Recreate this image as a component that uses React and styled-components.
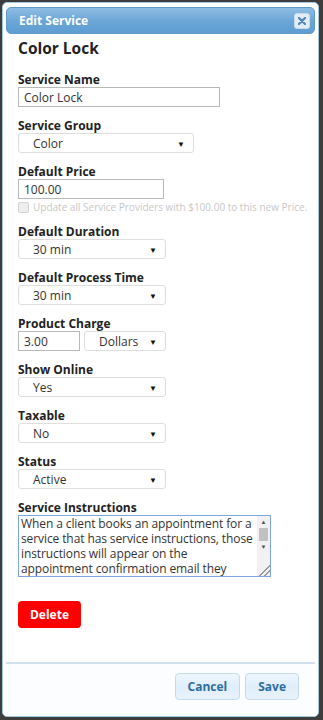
import React from "react";
import styled, { createGlobalStyle } from "styled-components";

const GlobalStyle = createGlobalStyle`
  html, body {
    margin: 0;
    padding: 0;
    background: #3d3d3d;
    font-family: "Open Sans", "Liberation Sans", sans-serif;
  }
`;

const FIELDS = [
  { label: "Default Duration", value: "30 min" },
  { label: "Default Process Time", value: "30 min" },
];

const LATER = [
  { label: "Show Online", value: "Yes" },
  { label: "Taxable", value: "No" },
  { label: "Status", value: "Active" },
];

const SelectBox = ({ value, width }) => (
  <Select $width={width}>
    <span>{value}</span>
    <Arrow>▼</Arrow>
  </Select>
);

const App = () => {
  return (
    <>
      <GlobalStyle />
      <Dialog>
        <TitleBar>
          <Title>Edit Service</Title>
          <CloseButton aria-label="close">
            <svg width="8" height="8" viewBox="0 0 8 8">
              <path
                d="M1 1 L7 7 M7 1 L1 7"
                stroke="#4f85bb"
                strokeWidth="2.2"
                strokeLinecap="round"
              />
            </svg>
          </CloseButton>
        </TitleBar>

        <Body>
          <Heading>Color Lock</Heading>

          <Field>
            <Label>Service Name</Label>
            <TextInput $width={202} defaultValue="Color Lock" />
          </Field>

          <Field>
            <Label>Service Group</Label>
            <SelectBox value="Color" width={176} />
          </Field>

          <Field $gap={10}>
            <Label>Default Price</Label>
            <TextInput $width={146} defaultValue="100.00" />
            <CheckRow>
              <Check />
              <span>Update all Service Providers with $100.00 to this new Price.</span>
            </CheckRow>
          </Field>

          {FIELDS.map((f) => (
            <Field key={f.label}>
              <Label>{f.label}</Label>
              <SelectBox value={f.value} width={148} />
            </Field>
          ))}

          <Field>
            <Label>Product Charge</Label>
            <Row>
              <TextInput $width={62} defaultValue="3.00" />
              <SelectBox value="Dollars" width={82} />
            </Row>
          </Field>

          {LATER.map((f) => (
            <Field key={f.label}>
              <Label>{f.label}</Label>
              <SelectBox value={f.value} width={148} />
            </Field>
          ))}

          <Field>
            <Label>Service Instructions</Label>
            <TextAreaBox>
              <TextAreaText>
                When a client books an appointment for a service that has service
                instructions, those instructions will appear on the appointment
                confirmation email they
              </TextAreaText>
              <ScrollBar>
                <ScrollArrow>▲</ScrollArrow>
                <ScrollThumb />
                <ScrollArrow>▼</ScrollArrow>
                <Grip />
              </ScrollBar>
            </TextAreaBox>
          </Field>

          <DeleteButton>Delete</DeleteButton>
        </Body>

        <Footer>
          <FooterButton>Cancel</FooterButton>
          <FooterButton>Save</FooterButton>
        </Footer>
      </Dialog>
    </>
  );
};

const Dialog = styled.div`
  margin: 2px 4px 3px 2px;
  height: 715px;
  box-sizing: border-box;
  border: 1px solid #a6c9e2;
  border-radius: 5px;
  background: #ffffff;
  padding: 4px 3px 0;
  display: flex;
  flex-direction: column;
`;

const TitleBar = styled.div`
  height: 27px;
  box-sizing: border-box;
  border: 1px solid #5c9ccc;
  border-radius: 5px;
  background: linear-gradient(#8fbde3, #6aa5d6 55%, #5f9dd1);
  display: flex;
  align-items: center;
  justify-content: space-between;
  padding: 0 4px 0 12px;
`;

const Title = styled.span`
  color: #ffffff;
  font-weight: 700;
  font-size: 12px;
`;

const CloseButton = styled.button`
  width: 16px;
  height: 16px;
  padding: 0;
  border: 1px solid #c5dbec;
  border-radius: 3px;
  background: #e2ecf5;
  display: flex;
  align-items: center;
  justify-content: center;
`;

const Body = styled.div`
  flex: 1;
  padding: 2px 12px 0;
  display: flex;
  flex-direction: column;
`;

const Heading = styled.h2`
  margin: 0 0 12px;
  font-size: 15.5px;
  font-weight: 700;
  color: #222;
  line-height: 24px;
`;

const Field = styled.div`
  display: flex;
  flex-direction: column;
  align-items: flex-start;
  margin-bottom: ${(p) => p.$gap ?? 11}px;
`;

const Label = styled.label`
  font-size: 12px;
  font-weight: 700;
  color: #222;
  line-height: 15px;
`;

const TextInput = styled.input`
  width: ${(p) => p.$width}px;
  height: 20px;
  box-sizing: border-box;
  border: 1px solid #b9b9b9;
  padding: 0 5px;
  font-family: inherit;
  font-size: 12px;
  color: #333;
  outline: none;
`;

const Select = styled.div`
  width: ${(p) => p.$width}px;
  height: 20px;
  box-sizing: border-box;
  border: 1px solid #dedede;
  border-radius: 3px;
  background: #fff;
  display: flex;
  align-items: center;
  justify-content: space-between;
  padding: 0 8px 0 14px;
  font-size: 12px;
  color: #333;
`;

const Arrow = styled.span`
  font-size: 8px;
  color: #111;
`;

const Row = styled.div`
  display: flex;
  gap: 4px;
`;

const CheckRow = styled.div`
  display: flex;
  align-items: center;
  gap: 4px;
  margin-top: 2px;
  line-height: 13px;
  font-size: 10px;
  color: #c8c8c8;
  white-space: nowrap;
`;

const Check = styled.span`
  width: 9px;
  height: 9px;
  border: 1px solid #d4d4d4;
  border-radius: 2px;
  background: #efefef;
`;

const TextAreaBox = styled.div`
  width: 253px;
  height: 62px;
  box-sizing: border-box;
  border: 1px solid #7ea6d8;
  display: flex;
  overflow: hidden;
`;

const TextAreaText = styled.div`
  flex: 1;
  padding: 0 1px 0 2px;
  font-size: 12px;
  line-height: 15px;
  letter-spacing: -0.1px;
  color: #333;
`;

const ScrollBar = styled.div`
  width: 13px;
  background: #f1f1f1;
  display: flex;
  flex-direction: column;
  align-items: center;
`;

const ScrollArrow = styled.span`
  font-size: 6px;
  color: #505050;
  line-height: 12px;
`;

const ScrollThumb = styled.div`
  width: 9px;
  height: 13px;
  background: #c1c1c1;
`;

const Grip = styled.div`
  margin-top: auto;
  width: 13px;
  height: 13px;
  background: linear-gradient(
    135deg,
    transparent 55%,
    #999 55%,
    #999 62%,
    transparent 62%,
    transparent 74%,
    #999 74%,
    #999 81%,
    transparent 81%
  );
`;

const DeleteButton = styled.button`
  margin-top: 13px;
  width: 63px;
  height: 27px;
  border: none;
  border-radius: 4px;
  background: #ff0000;
  color: #fff;
  font-family: inherit;
  font-weight: 700;
  font-size: 12px;
  align-self: flex-start;
`;

const Footer = styled.div`
  border-top: 2px solid #d0e0ee;
  height: 54px;
  box-sizing: border-box;
  background: #fcfdfe;
  display: flex;
  justify-content: flex-end;
  align-items: flex-start;
  gap: 5px;
  padding: 9px 16px 0 0;
`;

const FooterButton = styled.button`
  height: 27px;
  padding: 0 12px;
  border: 1px solid #c5dbec;
  border-radius: 4px;
  background: linear-gradient(#eef6fd, #dfeefa 50%, #e8f2fb);
  color: #2e6e9e;
  font-family: inherit;
  font-weight: 700;
  font-size: 12px;
`;

export default App;
